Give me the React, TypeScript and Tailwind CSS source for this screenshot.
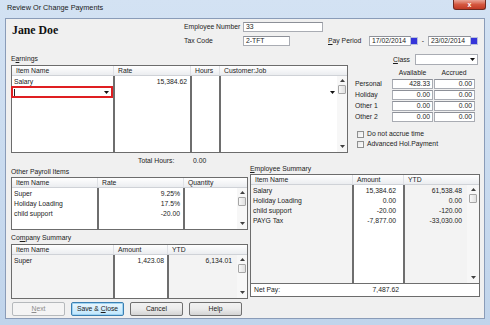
import React from "react";

type Col = { label: React.ReactNode; w: string; cell?: string; bg?: string };

function Arrow({ up }: { up?: boolean }) {
  return (
    <svg width="5" height="3" viewBox="0 0 5 3" className="shrink-0">
      <polygon points={up ? "0,3 2.5,0 5,3" : "0,0 5,0 2.5,3"} fill="#404040" />
    </svg>
  );
}

function DropArrow() {
  return (
    <svg width="5" height="3" viewBox="0 0 5 3" className="shrink-0">
      <polygon points="0,0 5,0 2.5,3" fill="#111" />
    </svg>
  );
}

function Scroll({ w = "w-[10px]" }: { w?: string }) {
  return (
    <div className={`${w} shrink-0 bg-[#f7f7f7] flex flex-col items-center pt-[3px] pb-[4px]`}>
      <Arrow up />
      <div className="mt-[3px] w-[8px] h-[9px] rounded-[1px] border border-[#a6a6a6] bg-gradient-to-r from-[#f8f8f8] to-[#e0e0e0]" />
      <div className="flex-1" />
      <Arrow />
    </div>
  );
}

function Grid({
  cols,
  rows,
  className,
  scrollW,
  footer,
}: {
  cols: Col[];
  rows: React.ReactNode[][];
  className: string;
  scrollW?: string;
  footer?: React.ReactNode;
}) {
  return (
    <div className={`border border-[#6c6c6c] bg-white flex flex-col ${className}`}>
      <div className="h-[10px] shrink-0 flex bg-gradient-to-b from-[#ffffff] to-[#ebedf0] border-b border-[#cfd2d7]">
        {cols.map((c, i) => (
          <div
            key={i}
            className={`${i === cols.length - 1 ? "flex-1" : c.w} ${
              i > 0 ? "border-l border-[#dfe1e5]" : ""
            } pl-[4px] leading-[9px] whitespace-nowrap`}
          >
            {c.label}
          </div>
        ))}
      </div>
      <div className="flex-1 min-h-0 flex">
        {cols.map((c, i) => (
          <div
            key={i}
            className={`${c.w} ${i > 0 ? "border-l-2 border-[#6e6e6e]" : ""} ${
              c.bg ?? "bg-white"
            } pt-[1px] flex flex-col`}
          >
            {rows.map((r, j) => (
              <div key={j} className={`h-[10px] leading-[10px] whitespace-nowrap ${c.cell ?? "pl-[2px]"}`}>
                {r[i]}
              </div>
            ))}
          </div>
        ))}
        <Scroll w={scrollW} />
      </div>
      {footer}
    </div>
  );
}

function Input({ w, children, right }: { w: string; children?: React.ReactNode; right?: boolean }) {
  return (
    <div
      className={`${w} h-[10px] bg-white border border-[#a9acb3] border-t-[#8d9098] leading-[8px] whitespace-nowrap ${
        right ? "text-right pr-[2px]" : "pl-[2px]"
      }`}
    >
      {children}
    </div>
  );
}

function DateBox({ w, value }: { w: string; value: string }) {
  return (
    <div className={`${w} h-[10px] flex items-center`}>
      <div className="flex-1 h-[10px] bg-white border border-[#a9acb3] border-t-[#8d9098] leading-[8px] pl-[2px] whitespace-nowrap">
        {value}
      </div>
      <div className="w-[8px] h-[8px] ml-[-1px] border border-[#b9c0dc] bg-[#3535d9] shrink-0" />
    </div>
  );
}

function Check({ label }: { label: string }) {
  return (
    <div className="h-[10px] flex items-center pl-[5px]">
      <div className="w-[7px] h-[7px] border border-[#8e8f8f] bg-gradient-to-br from-[#e6e6e6] to-[#ffffff] shrink-0" />
      <div className="ml-[3px] leading-[10px] whitespace-nowrap">{label}</div>
    </div>
  );
}

function Btn({ children, kind }: { children: React.ReactNode; kind?: "def" | "dis" }) {
  const base = "w-[53px] h-[14px] rounded-[2px] flex items-center justify-center leading-[10px] whitespace-pre";
  if (kind === "dis")
    return <div className={`${base} border border-[#b5b9bc] bg-[#f4f4f4] text-[#8d8d8d]`}>{children}</div>;
  if (kind === "def")
    return (
      <div className={`${base} border border-[#3c7fb1] bg-gradient-to-b from-[#eaf6fd] to-[#bee6fd] shadow-[inset_0_0_0_1px_#9fd4f3]`}>
        {children}
      </div>
    );
  return (
    <div className={`${base} border border-[#707070] bg-gradient-to-b from-[#f2f2f2] via-[#ebebeb] to-[#d4d4d4]`}>
      {children}
    </div>
  );
}

export default function App() {
  return (
    <div className="w-[490px] h-[325px] overflow-hidden flex flex-col bg-gradient-to-b from-[#d3e2f3] to-[#c0d4eb] font-['Liberation_Sans',Arial,sans-serif] text-[#1c1c1c] text-[6.8px] leading-[10px]">
      {/* Title bar */}
      <div className="h-[18px] shrink-0 flex items-start">
        <div className="pl-[7px] pt-[3px] text-[7.3px] leading-[10px] text-[#1a1a1a] flex-1">
          Review Or Change Payments
        </div>
        <div className="mr-[4px] w-[33px] h-[10px] rounded-b-[3px] border border-t-0 border-[#6e2b21] bg-gradient-to-b from-[#e8a597] via-[#d4573f] to-[#c13a24] flex items-center justify-center text-white text-[7px] font-bold leading-[8px]">
          x
        </div>
      </div>

      {/* Window body */}
      <div className="flex-1 flex px-[5px] pb-[6px] min-h-0">
        <div className="flex-1 border border-[#8a9cb8] bg-[#f0f0f0] flex flex-col">
          {/* Header row */}
          <div className="pt-[3px] pl-[6px] flex">
            <div className="w-[172px] pt-[1px] font-['Liberation_Serif',serif] font-bold text-[11.8px] leading-[14px] text-[#111]">
              Jane Doe
            </div>
            <div className="flex flex-col">
              <div className="h-[10px] flex items-center">
                <div className="w-[59px] whitespace-nowrap">Employee Number</div>
                <Input w="w-[80px]">33</Input>
              </div>
              <div className="h-[11px] mt-[3px] flex items-center">
                <div className="w-[59px] whitespace-nowrap">Tax Code</div>
                <Input w="w-[47px]">2-TFT</Input>
                <div className="ml-[38px] w-[41px] whitespace-nowrap">
                  <span className="underline">P</span>ay Period
                </div>
                <DateBox w="w-[49px]" value="17/02/2014" />
                <div className="w-[10px] text-center">-</div>
                <DateBox w="w-[50px]" value="23/02/2014" />
              </div>
            </div>
          </div>

          {/* Middle section */}
          <div className="mt-[6px] pl-[5px] flex">
            <div className="w-[337px] flex flex-col">
              <div className="h-[13px] flex items-end pb-[1px]">
                <div>
                  E<span className="underline">a</span>rnings
                </div>
              </div>
              <Grid
                className="h-[88px]"
                cols={[
                  { label: "Item Name", w: "w-[101px]" },
                  { label: "Rate", w: "w-[77px]", cell: "text-right pr-[3px]" },
                  { label: "Hours", w: "w-[29px]", cell: "text-right pr-[3px]" },
                  { label: "Customer:Job", w: "flex-1", cell: "" },
                ]}
                rows={[
                  ["Salary", "15,384.62", "", ""],
                  [
                    <div className="-ml-[3px] mt-[-1px] h-[12px] border-2 border-[#df1f22] bg-white flex items-center pl-[1px] pr-[2px]">
                      <div className="w-[1px] h-[7px] bg-[#222]" />
                      <div className="flex-1" />
                      <DropArrow />
                    </div>,
                    "",
                    "",
                    <div className="h-[10px] flex items-center justify-end pr-[2px]">
                      <DropArrow />
                    </div>,
                  ],
                ]}
              />
              <div className="h-[10px] pt-[3px] pl-[127px] flex">
                <div className="w-[55px] whitespace-nowrap">Total Hours:</div>
                <div>0.00</div>
              </div>
            </div>

            <div className="ml-[4px] w-[126px] flex flex-col">
              <div className="h-[13px] flex items-end justify-end">
                <div className="mr-[5px] leading-[11px]">
                  <span className="underline">C</span>lass
                </div>
                <div className="w-[63px] h-[11px] bg-white border border-[#a9acb3] flex items-center justify-end pr-[2px]">
                  <DropArrow />
                </div>
              </div>
              <div className="mt-[2px] h-[11px] flex items-center">
                <div className="w-[40px]" />
                <div className="w-[41px] text-center">Available</div>
                <div className="w-[42px] text-center">Accrued</div>
              </div>
              <div className="mt-[1px] flex flex-col">
                {[
                  ["Personal", "428.33", "0.00"],
                  ["Holiday", "0.00", "0.00"],
                  ["Other 1", "0.00", "0.00"],
                  ["Other 2", "0.00", "0.00"],
                ].map((r) => (
                  <div key={r[0]} className="h-[11px] flex items-start">
                    <div className="w-[40px] pl-[3px] leading-[10px]">{r[0]}</div>
                    <Input w="w-[41px]" right>
                      {r[1]}
                    </Input>
                    <div className="ml-[1px]">
                      <Input w="w-[41px]" right>
                        {r[2]}
                      </Input>
                    </div>
                  </div>
                ))}
              </div>
              <div className="mt-[6px] flex flex-col">
                <Check label="Do not accrue time" />
                <Check label="Advanced Hol.Payment" />
              </div>
            </div>
          </div>

          {/* Bottom section */}
          <div className="pl-[5px] flex">
            <div className="w-[237px] flex flex-col">
              <div className="h-[14px] flex items-end">
                <div>Other Payroll Items</div>
              </div>
              <Grid
                className="h-[53px]"
                cols={[
                  { label: "Item Name", w: "w-[85px]" },
                  { label: "Rate", w: "w-[86px]", cell: "text-right pr-[3px]" },
                  { label: "Quantity", w: "flex-1", cell: "text-right pr-[3px]" },
                ]}
                rows={[
                  ["Super", "9.25%", ""],
                  ["Holiday Loading", "17.5%", ""],
                  ["child support", "-20.00", ""],
                ]}
              />
              <div className="h-[14px] flex items-end pb-[1px]">
                <div>
                  Co<span className="underline">m</span>pany Summary
                </div>
              </div>
              <Grid
                className="h-[55px]"
                cols={[
                  { label: "Item Name", w: "w-[101px]", bg: "bg-[#f3f3f3]" },
                  { label: "Amount", w: "w-[54px]", cell: "text-right pr-[3px]" },
                  { label: "YTD", w: "flex-1", cell: "text-right pr-[5px]", bg: "bg-[#f3f3f3]" },
                ]}
                rows={[["Super", "1,423.08", "6,134.01"]]}
              />
              <div className="mt-[3px] pl-[1px] flex gap-[6px]">
                <Btn kind="dis">
                  <span className="underline">N</span>ext
                </Btn>
                <Btn kind="def">
                  {"Save & "}
                  <span className="underline">C</span>
                  {"lose"}
                </Btn>
                <Btn>Cancel</Btn>
                <Btn>Help</Btn>
              </div>
            </div>

            <div className="ml-[2px] w-[230px] flex flex-col">
              <div className="h-[11px] flex items-end">
                <div>
                  <span className="underline">E</span>mployee Summary
                </div>
              </div>
              <Grid
                className="h-[123px]"
                scrollW="w-[12px]"
                cols={[
                  { label: "Item Name", w: "w-[101px]", bg: "bg-[#f3f3f3]" },
                  { label: "Amount", w: "w-[51px]", cell: "text-right pr-[7px]" },
                  { label: "YTD", w: "flex-1", cell: "text-right pr-[5px]", bg: "bg-[#f3f3f3]" },
                ]}
                rows={[
                  ["Salary", "15,384.62", "61,538.48"],
                  ["Holiday Loading", "0.00", "0.00"],
                  ["child support", "-20.00", "-120.00"],
                  ["PAYG Tax", "-7,877.00", "-33,030.00"],
                ]}
                footer={
                  <div className="h-[13px] shrink-0 border-t border-[#6e6e6e] bg-white flex items-center">
                    <div className="w-[101px] pl-[3px]">Net Pay:</div>
                    <div className="w-[51px] text-right pr-[4px]">7,487.62</div>
                  </div>
                }
              />
            </div>
          </div>
        </div>
      </div>
    </div>
  );
}
